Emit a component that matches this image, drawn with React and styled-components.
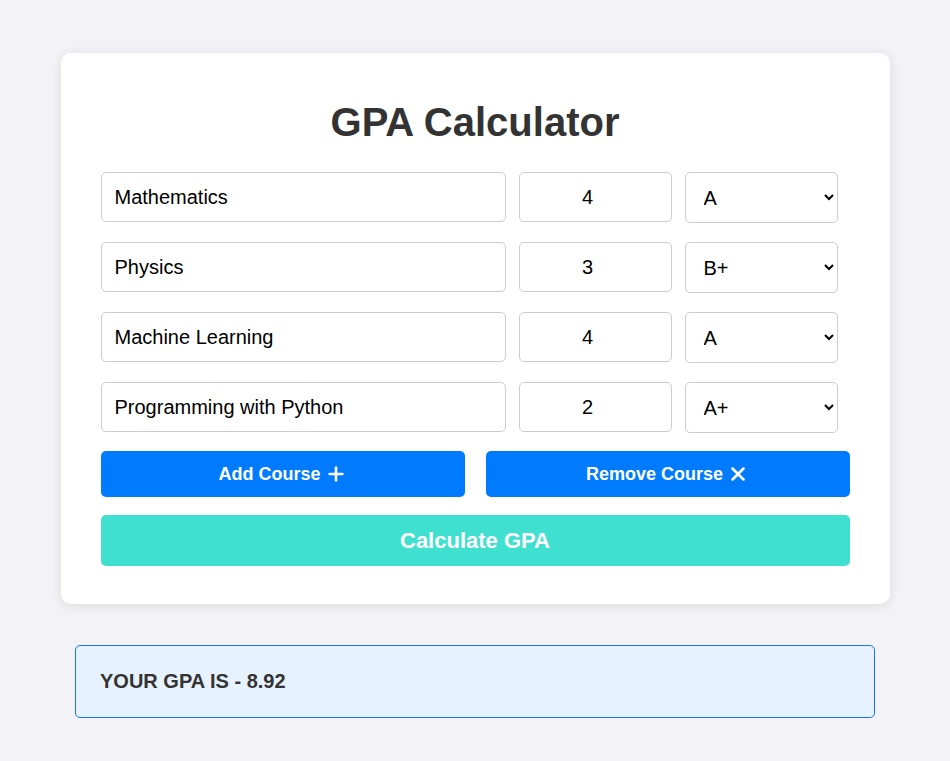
import React, { useState } from 'react'
import styled, { createGlobalStyle } from 'styled-components'
import { Plus, X } from 'lucide-react'

const Global = createGlobalStyle`
  body {
    margin: 0;
    background: #f3f2f7;
    font-family: "Liberation Sans", Arial, sans-serif;
  }
`

const Page = styled.div`
  padding: 53px 0 40px;
  display: flex;
  flex-direction: column;
  align-items: center;
`

const Card = styled.div`
  width: 829px;
  box-sizing: border-box;
  background: #fff;
  border-radius: 10px;
  box-shadow: 0 2px 12px rgba(0, 0, 0, 0.1);
  padding: 47px 40px 38px;
`

const Title = styled.h1`
  margin: 0 0 27px;
  text-align: center;
  font-size: 40px;
  font-weight: bold;
  color: #333;
`

const Rows = styled.div`
  display: flex;
  flex-direction: column;
  gap: 19px;
`

const Row = styled.div`
  display: flex;
  gap: 13px;
`

const Field = styled.input`
  box-sizing: border-box;
  width: ${p => p.$w}px;
  height: 50px;
  border: 1px solid #ccc;
  border-radius: 5px;
  padding: 0 13px;
  font-family: inherit;
  font-size: 20px;
  color: #000;
  text-align: ${p => (p.$center ? 'center' : 'left')};
  outline: none;
`

const Grade = styled.select`
  box-sizing: border-box;
  width: 153px;
  height: 51px;
  border: 1px solid #ccc;
  border-radius: 5px;
  padding: 0 10px 0 14px;
  font-family: inherit;
  font-size: 20px;
  color: #000;
  background: #fff;
`

const Actions = styled.div`
  display: flex;
  gap: 21px;
  margin-top: 18px;
`

const Button = styled.button`
  flex: 1;
  height: 46px;
  border: none;
  border-radius: 5px;
  background: #007bff;
  color: #fff;
  font-family: inherit;
  font-size: 18px;
  font-weight: bold;
  display: flex;
  align-items: center;
  justify-content: center;
  gap: 4px;
  cursor: pointer;
`

const CalcButton = styled.button`
  display: block;
  width: 100%;
  height: 51px;
  margin-top: 18px;
  border: none;
  border-radius: 5px;
  background: #40e0d0;
  color: #fff;
  font-family: inherit;
  font-size: 22px;
  font-weight: bold;
  cursor: pointer;
`

const Result = styled.div`
  box-sizing: border-box;
  width: 800px;
  margin-top: 41px;
  padding: 24px;
  background: #e6f2ff;
  border: 1px solid #1a73e8;
  border-radius: 5px;
  font-size: 20px;
  font-weight: bold;
  color: #333;
`

const grades = ['A+', 'A', 'B+', 'B', 'C+', 'C', 'D', 'F']

const App = () => {
  const [courses] = useState([
    { name: 'Mathematics', credits: 4, grade: 'A' },
    { name: 'Physics', credits: 3, grade: 'B+' },
    { name: 'Machine Learning', credits: 4, grade: 'A' },
    { name: 'Programming with Python', credits: 2, grade: 'A+' },
  ])

  return (
    <Page>
      <Global />
      <Card>
        <Title>GPA Calculator</Title>
        <Rows>
          {courses.map((c, i) => (
            <Row key={i}>
              <Field $w={405} defaultValue={c.name} />
              <Field $w={153} $center type="number" defaultValue={c.credits} />
              <Grade defaultValue={c.grade}>
                {grades.map(g => <option key={g}>{g}</option>)}
              </Grade>
            </Row>
          ))}
        </Rows>
        <Actions>
          <Button>Add Course <Plus size={22} strokeWidth={2.8} /></Button>
          <Button>Remove Course <X size={22} strokeWidth={2.8} /></Button>
        </Actions>
        <CalcButton>Calculate GPA</CalcButton>
      </Card>
      <Result>YOUR GPA IS - 8.92</Result>
    </Page>
  )
}

export default App
